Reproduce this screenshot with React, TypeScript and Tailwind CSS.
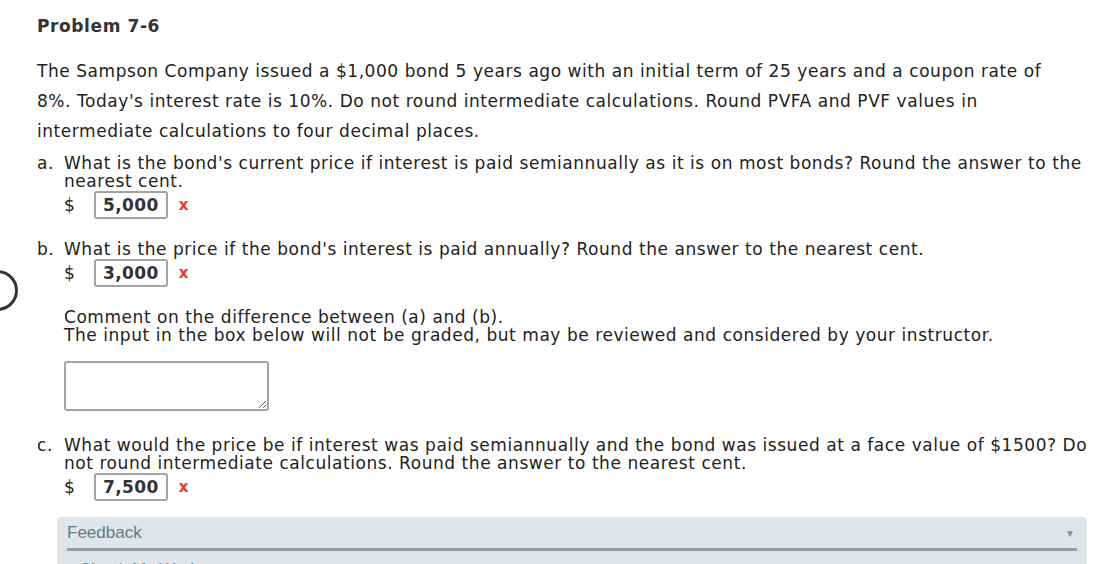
import React from "react";

function Answer({ value }: { value: string }) {
  return (
    <div className="flex items-center h-[28px] mt-[1px]">
      <span className="w-[30px]">$</span>
      <span className="h-[28px] px-[7px] border-2 border-[#a3a3a3] rounded-[3px] font-bold text-[#333] flex items-center leading-none tracking-[0.4px]">
        {value}
      </span>
      <span className="ml-[11px] text-[#e8372b] font-bold text-[15px] leading-none">x</span>
    </div>
  );
}

export default function App() {
  return (
    <div
      className="relative w-[1094px] h-[564px] overflow-hidden bg-white text-[#222] text-[17px] tracking-[0.55px]"
      style={{ fontFamily: "Verdana, 'DejaVu Sans', sans-serif" }}
    >
      <div className="absolute left-[-23px] top-[270px] w-[41px] h-[41px] rounded-full border-[3px] border-[#333]" />
      <div className="pl-[37px] pr-[4px]">
        <h2 className="pt-[15px] font-bold text-[17px] text-[#333] leading-[22px] tracking-[0.6px]">Problem 7-6</h2>
        <p className="mt-[19px] leading-[30px] w-[1030px]">
          The Sampson Company issued a $1,000 bond 5 years ago with an initial term of 25 years and a coupon rate of
          8%. Today's interest rate is 10%. Do not round intermediate calculations. Round PVFA and PVF values in
          intermediate calculations to four decimal places.
        </p>
        <div className="mt-[8px] flex">
          <span className="w-[27px] leading-[18px]">a.</span>
          <div className="flex-1 leading-[18px]">
            <div>
              What is the bond's current price if interest is paid semiannually as it is on most bonds? Round the answer to the
              nearest cent.
            </div>
            <Answer value="5,000" />
          </div>
        </div>
        <div className="mt-[21px] flex">
          <span className="w-[27px] leading-[18px]">b.</span>
          <div className="flex-1 leading-[18px]">
            <div>What is the price if the bond's interest is paid annually? Round the answer to the nearest cent.</div>
            <Answer value="3,000" />
            <div className="mt-[21px]">
              Comment on the difference between (a) and (b).
              <br />
              The input in the box below will not be graded, but may be reviewed and considered by your instructor.
            </div>
            <textarea className="mt-[17px] block w-[205px] h-[50px] border-2 border-[#a3a3a3] rounded-[3px] resize-y" />
          </div>
        </div>
        <div className="mt-[25px] flex">
          <span className="w-[27px] leading-[18px]">c.</span>
          <div className="flex-1 leading-[18px]">
            <div>
              What would the price be if interest was paid semiannually and the bond was issued at a face value of $1500? Do
              not round intermediate calculations. Round the answer to the nearest cent.
            </div>
            <Answer value="7,500" />
          </div>
        </div>
        <div
          className="mt-[16px] ml-[20px] w-[1030px] bg-[#dfe5e8] rounded-t-[4px] px-[10px] pt-[6px] tracking-normal"
          style={{ fontFamily: "'Liberation Sans', Arial, sans-serif" }}
        >
          <div className="flex items-center justify-between border-b-[3px] border-[#9a9c9e] pb-[5px]">
            <span className="text-[17px] text-[#5f7d7d] leading-[20px]">Feedback</span>
            <span className="text-[10px] text-[#8a8f93] mr-[2px]">▼</span>
          </div>
          <div className="pt-[6px] text-[17px] text-[#5f7d7d] pl-[12px]">Check My Work</div>
        </div>
      </div>
    </div>
  );
}
